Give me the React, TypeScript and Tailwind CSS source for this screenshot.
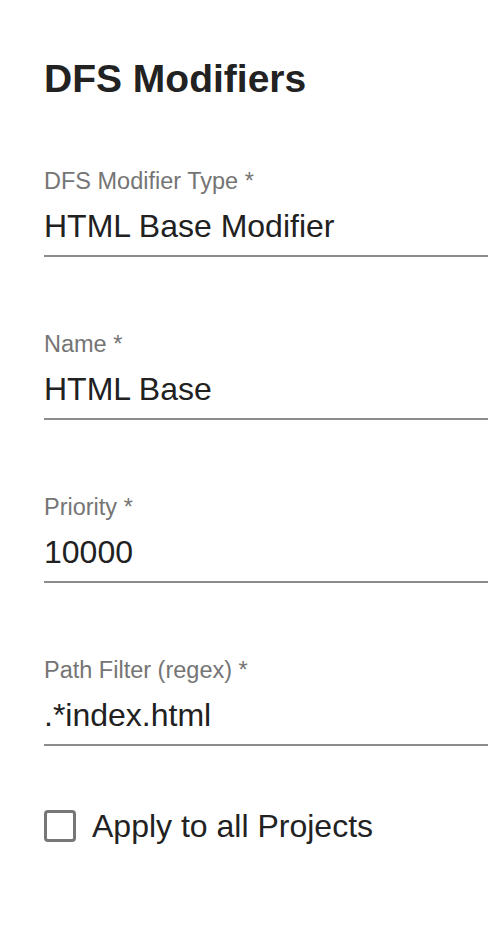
import React from 'react';

interface FieldProps {
  label: string;
  value: string;
}

const Field: React.FC<FieldProps> = ({ label, value }) => (
  <div className="flex flex-col">
    <label className="text-[23.5px] leading-none text-[#757575]">{label}</label>
    <div className="mt-[16px] pb-[13px] text-[32px] leading-none text-[#212121] border-b-2 border-[#8c8c8c]">
      {value}
    </div>
  </div>
);

export default function App() {
  const fields: FieldProps[] = [
    { label: 'DFS Modifier Type *', value: 'HTML Base Modifier' },
    { label: 'Name *', value: 'HTML Base' },
    { label: 'Priority *', value: '10000' },
    { label: 'Path Filter (regex) *', value: '.*index.html' },
  ];

  return (
    <div className="min-h-screen bg-white pl-[44px] pt-[59px] font-['Liberation_Sans',Arial,sans-serif]">
      {/* Header */}
      <h1 className="text-[39px] leading-none font-bold text-[#222222]">DFS Modifiers</h1>

      {/* Form fields */}
      <div className="mt-[72px] flex flex-col gap-[76.5px]">
        {fields.map((f) => (
          <Field key={f.label} label={f.label} value={f.value} />
        ))}
      </div>

      {/* Checkbox */}
      <label className="mt-[64px] flex items-center gap-[16px]">
        <span className="w-[32px] h-[32px] rounded-[4px] border-[3px] border-[#777777] bg-white" />
        <span className="text-[32px] leading-none text-[#222222]">Apply to all Projects</span>
      </label>
    </div>
  );
}
